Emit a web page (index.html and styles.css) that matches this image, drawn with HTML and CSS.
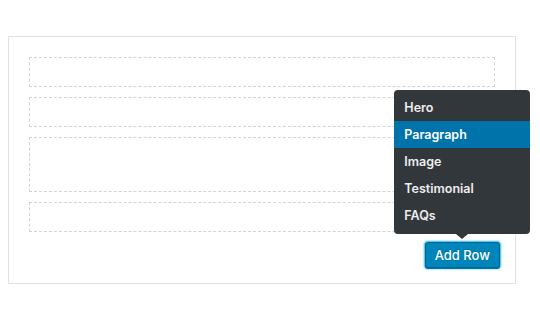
FILE: index.html
```html
<!DOCTYPE html>
<html lang="en">
<head>
    <meta charset="UTF-8">
    <meta name="viewport" content="width=device-width, initial-scale=1.0">
    <title>Row builder</title>
    <link rel="stylesheet" href="styles.css">
</head>
<body>
    <!-- Builder box -->
    <section class="builder">
        <div class="rows">
            <div class="row"></div>
            <div class="row"></div>
            <div class="row tall"></div>
            <div class="row"></div>
        </div>
        <div class="builder-footer">
            <div class="add-row">
                <!-- Row type menu -->
                <ul class="row-menu">
                    <li>Hero</li>
                    <li class="selected">Paragraph</li>
                    <li>Image</li>
                    <li>Testimonial</li>
                    <li>FAQs</li>
                </ul>
                <button class="button-primary">Add Row</button>
            </div>
        </div>
    </section>
</body>
</html>
```

FILE: styles.css
```css
/* General styling */
body {
    margin: 0;
    padding: 36px 8px 8px;
    background: #fff;
    font-family: Inter, 'Liberation Sans', sans-serif;
}
/* Builder box */
.builder {
    width: 508px;
    box-sizing: border-box;
    border: 1px solid #e0e0e0;
    padding: 20px 15px 15px 20px;
}
.rows {
    display: flex;
    flex-direction: column;
    gap: 10px;
    margin-right: 5px;
}
.row {
    height: 30px;
    box-sizing: border-box;
    border: 1px dashed #d4d4d4;
}
.row.tall {
    height: 55px;
}
.builder-footer {
    display: flex;
    justify-content: flex-end;
    margin-top: 10px;
}
.add-row {
    position: relative;
}
/* Button */
.button-primary {
    height: 26px;
    padding: 0 9px;
    margin: 0;
    font-family: inherit;
    font-size: 13px;
    font-weight: 500;
    color: #fff;
    background: #0085ba;
    border: 1px solid #006799;
    border-radius: 3px;
    box-shadow: 0 1px 0 #0073aa, 0 0 2px 1px #33b3db;
    text-shadow: 0 -1px 1px #006799;
    cursor: pointer;
}
/* Menu */
.row-menu {
    position: absolute;
    bottom: 34px;
    left: 50%;
    transform: translateX(-50%);
    width: 136px;
    margin: 0;
    padding: 4px 0 5px;
    list-style: none;
    background: #32373c;
    border-radius: 4px;
}
.row-menu::after {
    content: '';
    position: absolute;
    top: 100%;
    left: 50%;
    margin-left: -6px;
    border: 6px solid transparent;
    border-top: 5px solid #32373c;
    border-bottom: none;
}
.row-menu li {
    height: 27px;
    line-height: 27px;
    padding-left: 10px;
    font-size: 12.5px;
    font-weight: 600;
    color: #eee;
}
.row-menu li.selected {
    background: #0073aa;
    color: #fff;
}
```
